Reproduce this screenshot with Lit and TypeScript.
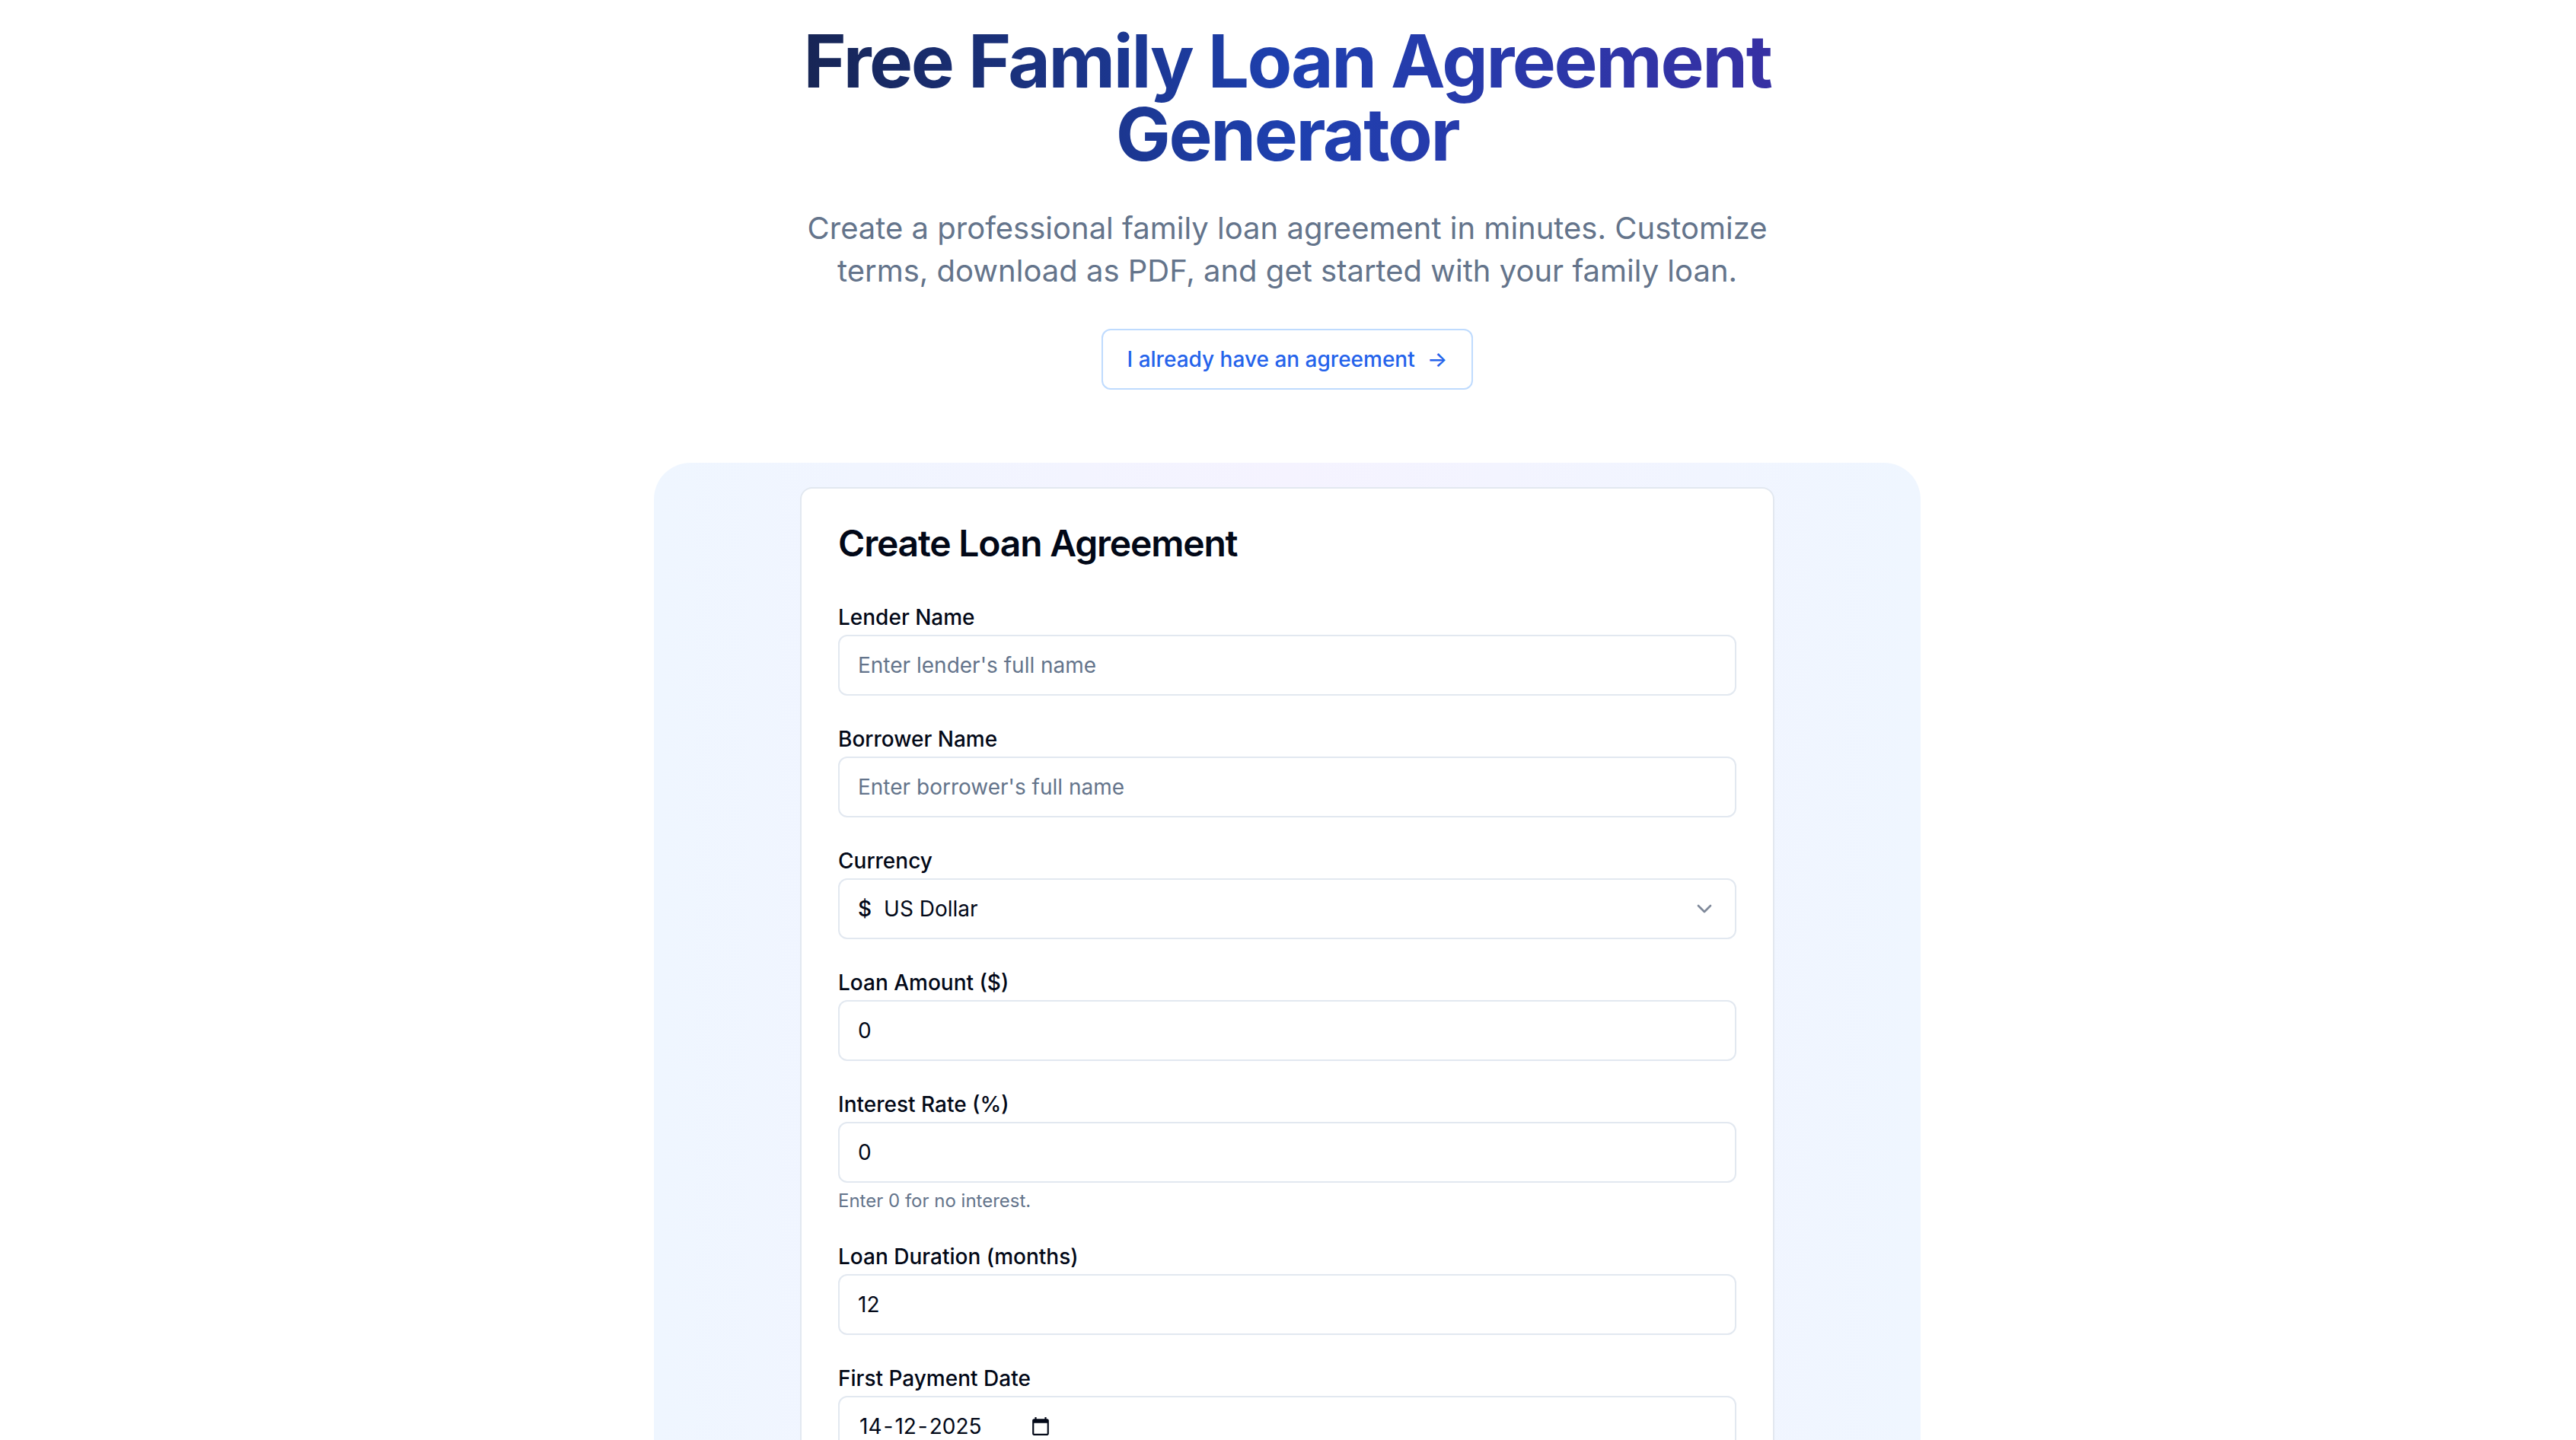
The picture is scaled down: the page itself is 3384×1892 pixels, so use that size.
import { LitElement, css, html, nothing } from 'lit';
import { customElement, property } from 'lit/decorators.js';

/**
 * A label above a bordered form control.
 *
 * @slot - The content of the control
 */
@customElement('form-field')
export class FormField extends LitElement {
  @property()
  label = '';

  @property()
  hint = '';

  render() {
    return html`
      <div class="row"><label>${this.label}</label></div>
      <div class="control"><slot></slot></div>
      ${this.hint ? html`<p class="hint">${this.hint}</p>` : nothing}
    `;
  }

  static styles = css`
    :host {
      display: block;
    }

    .row {
      font-size: 32px;
      line-height: 48px;
      height: 48px;
    }

    label {
      font-size: 28px;
      line-height: 28px;
      font-weight: 500;
    }

    .control {
      box-sizing: border-box;
      display: flex;
      align-items: center;
      height: 80px;
      padding: 0 24px;
      border: 2px solid #e2e8f0;
      border-radius: 12px;
      background: #fff;
      font-size: 28px;
      line-height: 40px;
    }

    .hint {
      margin: 8px 0 0;
      font-size: 24px;
      line-height: 32px;
      color: #64748b;
    }
  `;
}

@customElement('app-root')
export class AppRoot extends LitElement {
  render() {
    return html`
      <header>
        <h1>Free Family Loan Agreement Generator</h1>
        <p class="lead">
          Create a professional family loan agreement in minutes. Customize
          terms, download as PDF, and get started with your family loan.
        </p>
        <button class="existing">
          I already have an agreement
          <span>→</span>
        </button>
      </header>
      <main>
        <section class="card">
          <h2>Create Loan Agreement</h2>
          <form>
            <form-field label="Lender Name">
              <span class="placeholder">Enter lender's full name</span>
            </form-field>
            <form-field label="Borrower Name">
              <span class="placeholder">Enter borrower's full name</span>
            </form-field>
            <form-field label="Currency">
              <span class="currency"><span class="symbol">$</span>US Dollar</span>
              <svg class="chevron" viewBox="0 0 24 24">
                <path d="m6 9 6 6 6-6" />
              </svg>
            </form-field>
            <form-field label="Loan Amount ($)">0</form-field>
            <form-field label="Interest Rate (%)" hint="Enter 0 for no interest.">0</form-field>
            <form-field label="Loan Duration (months)">12</form-field>
            <form-field label="First Payment Date">
              <span class="date"><span>14</span>-<span>12</span>-<span>2025</span></span>
              <svg class="calendar" viewBox="0 0 24 24">
                <path d="M20 3h-1V1h-2v2H7V1H5v2H4c-1.1 0-2 .9-2 2v16c0 1.1.9 2 2 2h16c1.1 0 2-.9 2-2V5c0-1.1-.9-2-2-2zm0 18H4V8h16v13z" />
              </svg>
            </form-field>
          </form>
        </section>
      </main>
    `;
  }

  static styles = css`
    :host {
      display: flex;
      flex-direction: column;
      align-items: center;
      gap: 96px;
      box-sizing: border-box;
      width: 3382px;
      height: 1892px;
      padding-top: 32px;
      overflow: hidden;
      background: #fff;
      color: #020817;
      font-family: Inter, 'Liberation Sans', sans-serif;
    }

    header {
      display: flex;
      flex-direction: column;
      align-items: center;
      gap: 48px;
      width: 1280px;
      text-align: center;
    }

    h1 {
      margin: 0;
      width: 1280px;
      font-size: 96px;
      line-height: 96px;
      font-weight: 700;
      letter-spacing: -0.025em;
      color: transparent;
      background: linear-gradient(to right, #172554, #1e40af, #3730a3);
      -webkit-background-clip: text;
      background-clip: text;
    }

    .lead {
      margin: 0;
      font-size: 40px;
      line-height: 56px;
      color: #64748b;
    }

    .existing {
      display: flex;
      align-items: center;
      gap: 16px;
      box-sizing: border-box;
      height: 80px;
      padding: 0 32px;
      border: 2px solid #bfdbfe;
      border-radius: 12px;
      background: #fff;
      color: #2563eb;
      font: 500 28px/40px Inter, sans-serif;
    }

    main {
      flex: none;
      box-sizing: border-box;
      width: 1664px;
      height: 1500px;
      padding: 32px 192px;
      border-radius: 48px;
      background: linear-gradient(to right, #eff6ff, #f5f3ff, #eff6ff);
    }

    .card {
      box-sizing: border-box;
      height: 1600px;
      padding: 48px;
      border: 2px solid #e2e8f0;
      border-radius: 16px;
      background: #fff;
    }

    h2 {
      margin: 0 0 48px;
      font-size: 48px;
      line-height: 48px;
      font-weight: 600;
      letter-spacing: -0.025em;
    }

    form {
      display: flex;
      flex-direction: column;
      gap: 32px;
    }

    .placeholder {
      color: #64748b;
    }

    .currency {
      display: flex;
      gap: 16px;
    }

    .symbol {
      font-weight: 500;
    }

    .chevron {
      width: 32px;
      height: 32px;
      margin-left: auto;
      fill: none;
      stroke: #7f899a;
      stroke-width: 2;
      stroke-linecap: round;
      stroke-linejoin: round;
    }

    .date span {
      padding: 0 2px;
    }

    .calendar {
      width: 26px;
      height: 26px;
      margin-left: 62px;
      fill: currentColor;
    }
  `;
}

declare global {
  interface HTMLElementTagNameMap {
    'form-field': FormField;
    'app-root': AppRoot;
  }
}
